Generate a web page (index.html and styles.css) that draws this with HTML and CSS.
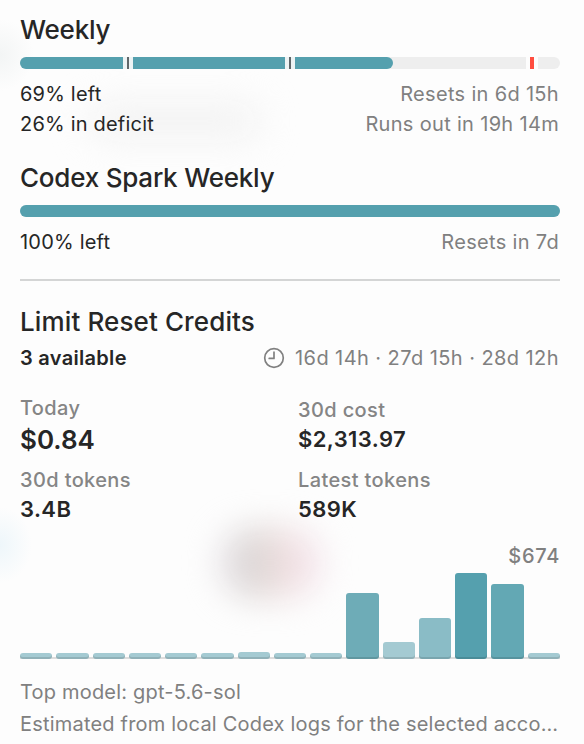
FILE: index.html
```html
<!DOCTYPE html>
<html lang="en">
<head>
    <meta charset="UTF-8">
    <meta name="viewport" content="width=device-width, initial-scale=1.0">
    <title>Codex Usage</title>
    <link rel="stylesheet" href="styles.css">
</head>
<body>
<main class="panel">
    <section class="limit">
        <h2 class="title tight">Weekly</h2>
        <div class="track">
            <div class="fill" style="width: 69%"></div>
            <span class="mark" style="left: 19.07%"></span>
            <span class="mark" style="left: 49.07%"></span>
            <span class="mark pace" style="left: 93.7%"></span>
        </div>
        <div class="row">
            <span>69% left</span>
            <span class="muted">Resets in 6d 15h</span>
        </div>
        <div class="row">
            <span>26% in deficit</span>
            <span class="muted">Runs out in 19h 14m</span>
        </div>
    </section>

    <section class="limit">
        <h2 class="title tight">Codex Spark Weekly</h2>
        <div class="track">
            <div class="fill" style="width: 100%"></div>
        </div>
        <div class="row">
            <span>100% left</span>
            <span class="muted">Resets in 7d</span>
        </div>
    </section>

    <hr class="divider">

    <section class="credits">
        <h2 class="title">Limit Reset Credits</h2>
        <div class="row">
            <span class="available">3 available</span>
            <span class="muted expiry">
                <svg class="clock" width="22" height="22" viewBox="0 0 22 22" fill="none" stroke="currentColor" stroke-width="1.7" stroke-linecap="round" stroke-linejoin="round">
                    <circle cx="11" cy="11" r="9.3"/>
                    <path d="M11 5.2V11.4H6.2"/>
                </svg>
                <span>16d 14h · 27d 15h · 28d 12h</span>
            </span>
        </div>
    </section>

    <section class="stats">
        <div class="stat">
            <div class="label">Today</div>
            <div class="value big">$0.84</div>
        </div>
        <div class="stat">
            <div class="label">30d cost</div>
            <div class="value">$2,313.97</div>
        </div>
        <div class="stat">
            <div class="label">30d tokens</div>
            <div class="value">3.4B</div>
        </div>
        <div class="stat">
            <div class="label">Latest tokens</div>
            <div class="value">589K</div>
        </div>
    </section>

    <section class="history">
        <div class="peak">$674</div>
        <div class="chart">
            <div class="bar" style="height: 6px"></div>
            <div class="bar" style="height: 6px"></div>
            <div class="bar" style="height: 6px"></div>
            <div class="bar" style="height: 6px"></div>
            <div class="bar" style="height: 6px"></div>
            <div class="bar" style="height: 6px"></div>
            <div class="bar" style="height: 7px"></div>
            <div class="bar" style="height: 6px"></div>
            <div class="bar" style="height: 6px"></div>
            <div class="bar" style="height: 66px; background-color: #6eacb7"></div>
            <div class="bar" style="height: 17px"></div>
            <div class="bar" style="height: 41px; background-color: #8abcc6"></div>
            <div class="bar" style="height: 86px; background-color: #55a0ae"></div>
            <div class="bar" style="height: 75px; background-color: #63a8b4"></div>
            <div class="bar" style="height: 6px"></div>
        </div>
    </section>

    <footer class="notes muted">
        <p>Top model: gpt-5.6-sol</p>
        <p>Estimated from local Codex logs for the selected acco…</p>
    </footer>
</main>
</body>
</html>
```

FILE: styles.css
```css
* {
    box-sizing: border-box;
}
body {
    margin: 0;
    font-family: Inter, "Liberation Sans", sans-serif;
    font-size: 20px;
    line-height: 30px;
    letter-spacing: 0.2px;
    color: #262626;
    background-color: #fdfdfd;
}
.panel {
    position: relative;
    z-index: 0;
    width: 584px;
    height: 744px;
    padding: 15px 24px 0 20px;
    overflow: hidden;
    background:
        radial-gradient(ellipse 32px 38px at 0 545px, rgba(228, 242, 249, 0.6), transparent),
        radial-gradient(ellipse 34px 36px at 0 55px, rgba(236, 240, 240, 0.6), transparent),
        #fdfdfd;
}
/* Soft colours showing through the translucent menu */
.panel::before,
.panel::after {
    content: "";
    position: absolute;
    z-index: -1;
}
.panel::before {
    left: 218px;
    top: 527px;
    width: 104px;
    height: 72px;
    border-radius: 36px;
    background: linear-gradient(90deg, #e8e4ea, #dad5d3 35%, #f0e0e0 62%, #f4e4ee);
    filter: blur(16px);
}
.panel::after {
    left: 90px;
    top: 106px;
    width: 170px;
    height: 30px;
    border-radius: 15px;
    background-color: #f1f1f1;
    filter: blur(18px);
}
.limit {
    margin-bottom: 24px;
}
.title {
    margin: 0;
    font-size: 26px;
    font-weight: 500;
    line-height: 30px;
    letter-spacing: 0.12px;
}
.title.tight {
    letter-spacing: -0.22px;
}
.row {
    display: flex;
    justify-content: space-between;
    padding-right: 1px;
    white-space: nowrap;
}
.muted {
    color: #808080;
}
.row .muted {
    letter-spacing: 0.32px;
}
.row .expiry {
    letter-spacing: 0.43px;
}
.track {
    position: relative;
    height: 12px;
    margin: 12px 0 10px;
    border-radius: 6px;
    background-color: #eeeeee;
}
.fill {
    height: 100%;
    border-radius: 6px;
    background-color: #55a0ae;
}
.mark {
    position: absolute;
    top: 0;
    width: 10px;
    height: 12px;
    background: linear-gradient(#5f6669, #5f6669) 4px 0 / 2px 12px no-repeat #edf3f4;
}
.mark.pace {
    width: 12px;
    background: linear-gradient(#ff4d40, #ff4d40) 4px 0 / 4px 12px no-repeat #fdfdfd;
}
.divider {
    height: 2px;
    margin: -2px 0 26px;
    border: 0;
    background-color: #d4d5d5;
}
.credits .row {
    margin-top: 6px;
}
.available {
    font-weight: 600;
    letter-spacing: 0.3px;
}
.expiry {
    display: flex;
    align-items: center;
    gap: 10px;
}
.stats {
    display: grid;
    grid-template-columns: 278px 1fr;
    grid-template-rows: 60px 54px;
    row-gap: 12px;
    margin-top: 23px;
}
.stat:nth-child(2) {
    padding-top: 2px;
}
.label {
    margin-bottom: 4px;
    font-weight: 500;
    line-height: 24px;
    letter-spacing: 0.38px;
    color: #858585;
}
.value {
    font-size: 22px;
    font-weight: 600;
    line-height: 26px;
    letter-spacing: 0.4px;
}
.value.big {
    font-size: 26px;
    line-height: 32px;
    letter-spacing: 0;
}
.peak {
    margin-top: 19px;
    font-weight: 500;
    letter-spacing: 0.7px;
    text-align: right;
    color: #808080;
}
.chart {
    display: grid;
    grid-template-columns: repeat(15, 1fr);
    column-gap: 4px;
    align-items: end;
    height: 86px;
    margin-top: 2px;
    background: linear-gradient(#dddddd, #dddddd) 0 100% / 100% 2px no-repeat;
}
.bar {
    border-radius: 3px;
    background-color: #a4cad2;
    box-shadow: inset 0 -2px rgba(0, 0, 0, 0.12);
}
.notes {
    margin-top: 17px;
    line-height: 32px;
    white-space: nowrap;
}
.notes p {
    margin: 0;
}
```
